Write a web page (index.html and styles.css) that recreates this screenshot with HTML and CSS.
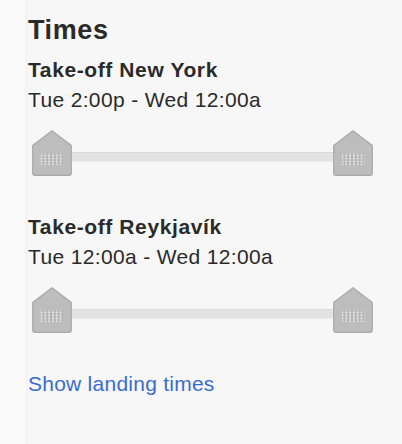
FILE: index.html
```html
<!DOCTYPE html>
<html lang="en">
<head>
<meta charset="utf-8">
<title>Times</title>
<link rel="stylesheet" href="styles.css">
</head>
<body>
<div class="page">
  <div class="gutter"></div>
  <div class="panel">
    <h2 class="title">Times</h2>

    <div class="group">
      <h3 class="label">Take-off New York</h3>
      <p class="range">Tue 2:00p - Wed 12:00a</p>
      <div class="slider">
        <svg class="handle" width="40" height="46" viewBox="0 0 40 46">
          <path class="handle-body" d="M20 0.8 L39.3 15.5 L39.3 43 Q39.3 45.3 37 45.3 L3 45.3 Q0.7 45.3 0.7 43 L0.7 15.5 Z"/>
          <rect class="grip-bg" x="8" y="23" width="23" height="12"/>
          <rect class="grip" x="8" y="23" width="23" height="12" fill="url(#dots)"/>
        </svg>
        <div class="track"></div>
        <svg class="handle" width="40" height="46" viewBox="0 0 40 46">
          <path class="handle-body" d="M20 0.8 L39.3 15.5 L39.3 43 Q39.3 45.3 37 45.3 L3 45.3 Q0.7 45.3 0.7 43 L0.7 15.5 Z"/>
          <rect class="grip-bg" x="9" y="23" width="23" height="12"/>
          <rect class="grip" x="9" y="23" width="23" height="12" fill="url(#dots)"/>
        </svg>
      </div>
    </div>

    <div class="group">
      <h3 class="label">Take-off Reykjavík</h3>
      <p class="range">Tue 12:00a - Wed 12:00a</p>
      <div class="slider">
        <svg class="handle" width="40" height="46" viewBox="0 0 40 46">
          <path class="handle-body" d="M20 0.8 L39.3 15.5 L39.3 43 Q39.3 45.3 37 45.3 L3 45.3 Q0.7 45.3 0.7 43 L0.7 15.5 Z"/>
          <rect class="grip-bg" x="8" y="23" width="23" height="12"/>
          <rect class="grip" x="8" y="23" width="23" height="12" fill="url(#dots)"/>
        </svg>
        <div class="track"></div>
        <svg class="handle" width="40" height="46" viewBox="0 0 40 46">
          <path class="handle-body" d="M20 0.8 L39.3 15.5 L39.3 43 Q39.3 45.3 37 45.3 L3 45.3 Q0.7 45.3 0.7 43 L0.7 15.5 Z"/>
          <rect class="grip-bg" x="9" y="23" width="23" height="12"/>
          <rect class="grip" x="9" y="23" width="23" height="12" fill="url(#dots)"/>
        </svg>
      </div>
    </div>

    <a class="link" href="#">Show landing times</a>
  </div>
</div>
<svg class="defs" width="0" height="0">
  <defs>
    <pattern id="dots" x="0" y="0" width="3.8" height="3" patternUnits="userSpaceOnUse">
      <rect x="0.9" y="0.5" width="2" height="2" fill="#e6e6e6"/>
    </pattern>
  </defs>
</svg>
</body>
</html>
```
FILE: styles.css
```css
html, body {
  margin: 0;
  padding: 0;
  background: #f7f7f7;
}

.page {
  display: flex;
  min-height: 444px;
  font-family: "Liberation Sans", Arial, Helvetica, sans-serif;
  color: #2a2a2a;
}

.gutter {
  width: 26px;
  flex: none;
  background: #fafafa;
  border-right: 1px solid #f0f0f0;
}

.panel {
  flex: 1;
  padding: 15px 29px 0 1px;
  display: flex;
  flex-direction: column;
}

.title {
  margin: 0 0 10px;
  font-size: 27px;
  line-height: 30px;
  font-weight: bold;
  letter-spacing: 0.6px;
  color: #2a2a2a;
}

.group {
  margin-bottom: 36px;
}

.label {
  margin: 0;
  font-size: 21px;
  line-height: 30px;
  font-weight: bold;
  letter-spacing: 0.6px;
}

.range {
  margin: 0;
  font-size: 21px;
  line-height: 29px;
  letter-spacing: 0.35px;
}

.slider {
  display: flex;
  align-items: flex-start;
  margin: 16px 0 0 4px;
}

.handle {
  flex: none;
  display: block;
}

.handle-body {
  fill: #bdbdbd;
  stroke: #a9a9a9;
  stroke-width: 1.2;
  stroke-linejoin: round;
}

.grip-bg {
  fill: #b3b3b3;
}

.track {
  flex: 1;
  height: 8px;
  margin-top: 22px;
  background: #e3e3e3;
  border-top: 1px solid #d9d9d9;
  border-bottom: 1px solid #ececec;
}

.link {
  font-size: 21px;
  line-height: 30px;
  letter-spacing: 0.25px;
  color: #3b6cd2;
  text-decoration: none;
  align-self: flex-start;
}

.defs {
  position: absolute;
}
```
